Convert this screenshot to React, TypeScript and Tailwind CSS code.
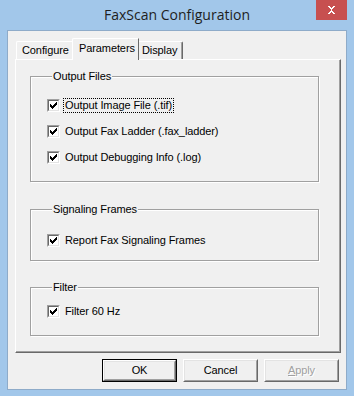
import React from "react";

function Check() {
  const cols = [2, 3, 4, 3, 2, 1, 0];
  return (
    <svg width="7" height="7" viewBox="0 0 7 7" shapeRendering="crispEdges" className="block">
      {cols.map((y, x) => (
        <rect key={x} x={x} y={y} width="1" height="3" fill="#000" />
      ))}
    </svg>
  );
}

function CheckBox({ label, focused }: { label: string; focused?: boolean }) {
  return (
    <div className="flex items-center h-[13px]">
      <div className="w-[13px] h-[13px] border border-t-[#a0a0a0] border-l-[#a0a0a0] border-r-white border-b-white">
        <div className="w-full h-full border border-t-[#696969] border-l-[#696969] border-r-[#e3e3e3] border-b-[#e3e3e3] bg-white flex items-center justify-center">
          <Check />
        </div>
      </div>
      <span
        className={
          "ml-[3px] px-[1px] leading-[13px] border " +
          (focused ? "border-dotted border-black" : "border-transparent")
        }
      >
        {label}
      </span>
    </div>
  );
}

function GroupBox({
  title,
  className,
  children,
}: {
  title: string;
  className: string;
  children: React.ReactNode;
}) {
  return (
    <fieldset
      className={
        "border border-[#a0a0a0] shadow-[inset_1px_1px_0_#fff,1px_1px_0_#fff] pl-[16px] " +
        className
      }
    >
      <legend className="ml-[5px] px-[1px] leading-[14px] bg-[#f0f0f0]">{title}</legend>
      {children}
    </fieldset>
  );
}

function Button({
  children,
  primary,
  disabled,
}: {
  children: React.ReactNode;
  primary?: boolean;
  disabled?: boolean;
}) {
  const inner = (
    <div className="w-full h-full border border-t-white border-l-white border-r-[#696969] border-b-[#696969]">
      <div className="w-full h-full border border-t-[#e3e3e3] border-l-[#e3e3e3] border-r-[#a0a0a0] border-b-[#a0a0a0] flex items-center justify-center">
        {children}
      </div>
    </div>
  );
  return (
    <div
      className={
        "w-[75px] h-[23px] bg-[#f0f0f0] " +
        (primary ? "border border-black" : "") +
        (disabled ? " text-[#a0a0a0] [text-shadow:1px_1px_0_#fff]" : "")
      }
    >
      {inner}
    </div>
  );
}

export default function App() {
  return (
    <div className="w-[354px] h-[396px] bg-[#a2c7ea] flex flex-col font-['Liberation_Sans',Arial,sans-serif] text-[11px] tracking-[-0.1px] text-black">
      <div className="h-[30px] relative flex items-start justify-center">
        <span className="mt-[5px] font-['Open_Sans','Noto_Sans',sans-serif] text-[14px] tracking-normal leading-[20px] text-[#1e1e1e]">
          FaxScan Configuration
        </span>
        <div className="absolute right-[7px] top-0 w-[31px] h-[20px] bg-[#c75050] flex items-center justify-center">
          <svg width="9" height="8" viewBox="0 0 9 8" shapeRendering="crispEdges">
            <path d="M1 0h2v1h1v1h1v-1h1v-1h2v1h-1v1h-1v1h-1v2h1v1h1v1h1v1h-2v-1h-1v-1h-1v1h-1v1h-2v-1h1v-1h1v-1h1v-2h-1v-1h-1z" fill="#fff" />
          </svg>
        </div>
      </div>

      <div className="flex-1 mx-[7px] mb-[6px] border border-[#8eabc9] bg-[#f0f0f0] flex flex-col">
        <div className="h-[27px] mt-[1px] flex items-end pl-[8px] relative z-10">
          <div className="w-[58px] h-[18px] border-t border-l border-white border-r border-r-[#a0a0a0] rounded-tl-[2px] pl-[5px] pt-[2px] leading-[13px]">
            Configure
          </div>
          <div className="w-[67px] h-[22px] -mx-[2px] -mb-[1px] border-t border-l border-white border-r border-r-[#696969] rounded-tl-[2px] bg-[#f0f0f0] pl-[6px] pt-[3px] leading-[13px] relative">
            Parameters
          </div>
          <div className="w-[46px] h-[18px] border-t border-white border-r border-r-[#696969] rounded-tr-[2px] pl-[5px] pt-[2px] leading-[13px] shadow-[inset_-1px_0_0_#a0a0a0]">
            Display
          </div>
        </div>

        <div className="ml-[7px] mr-[5px] h-[294px] border-t border-l border-white border-r border-b border-r-[#696969] border-b-[#696969] shadow-[inset_-1px_-1px_0_#a0a0a0] flex flex-col pl-[14px] pr-[21px] pt-[9px]">
          <GroupBox title="Output Files" className="h-[113px] pt-[16px]">
            <div className="flex flex-col gap-[13px]">
              <CheckBox label="Output Image File (.tif)" focused />
              <CheckBox label="Output Fax Ladder (.fax_ladder)" />
              <CheckBox label="Output Debugging Info (.log)" />
            </div>
          </GroupBox>
          <GroupBox title="Signaling Frames" className="h-[59px] mt-[20px] pt-[18px]">
            <CheckBox label="Report Fax Signaling Frames" />
          </GroupBox>
          <GroupBox title="Filter" className="h-[56px] mt-[19px] pt-[11px]">
            <CheckBox label="Filter 60 Hz" />
          </GroupBox>
        </div>

        <div className="flex justify-end gap-[6px] mt-[6px] pr-[7px]">
          <Button primary>OK</Button>
          <Button>Cancel</Button>
          <Button disabled>
            <span>
              <span className="underline">A</span>pply
            </span>
          </Button>
        </div>
      </div>
    </div>
  );
}
